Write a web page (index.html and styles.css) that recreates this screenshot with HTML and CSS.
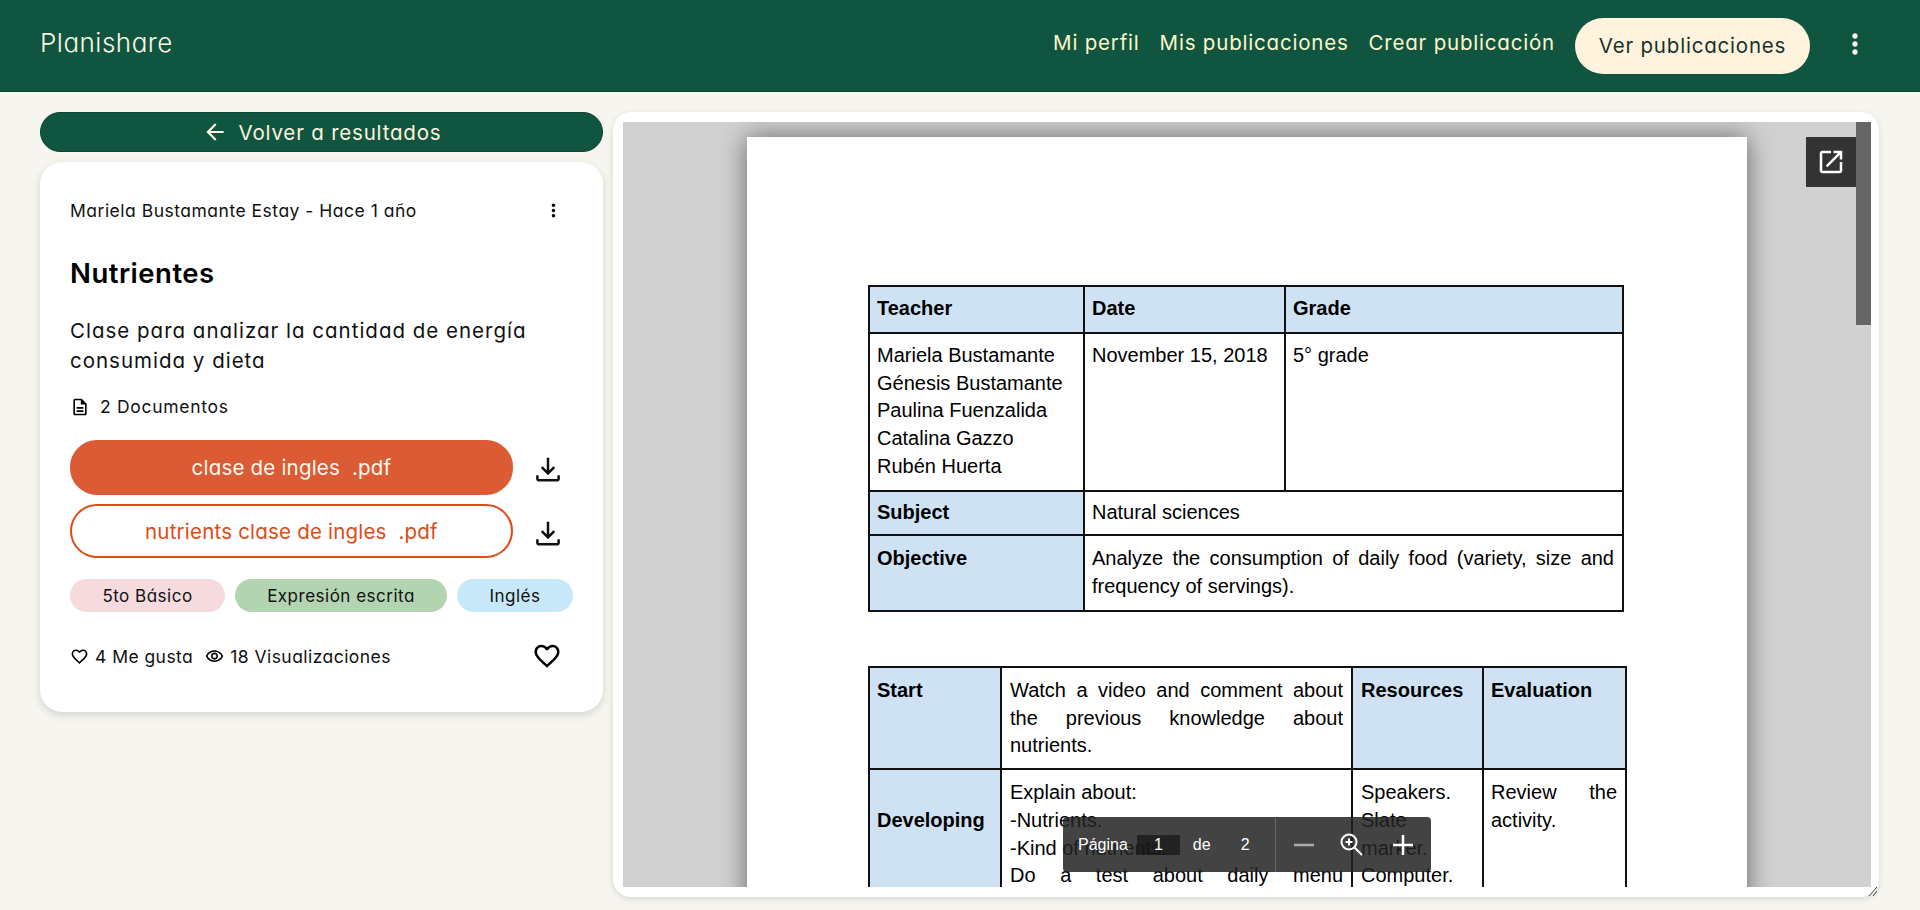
FILE: index.html
```html
<!DOCTYPE html>
<html lang="es">
<head>
<meta charset="utf-8">
<title>Planishare</title>
<link rel="stylesheet" href="styles.css">
</head>
<body>

<header class="topbar">
  <a class="brand" href="#">Planishare</a>
  <nav class="topnav">
    <a href="#">Mi perfil</a>
    <a href="#">Mis publicaciones</a>
    <a href="#">Crear publicación</a>
    <a class="topnav-cta" href="#">Ver publicaciones</a>
    <svg class="topnav-more" viewBox="0 0 24 24"><path d="M12 8c1.1 0 2-.9 2-2s-.9-2-2-2-2 .9-2 2 .9 2 2 2zm0 2c-1.1 0-2 .9-2 2s.9 2 2 2 2-.9 2-2-.9-2-2-2zm0 6c-1.1 0-2 .9-2 2s.9 2 2 2 2-.9 2-2-.9-2-2-2z"/></svg>
  </nav>
</header>

<main class="content">
  <section class="side">
    <a class="back" href="#">
      <svg viewBox="0 0 24 24"><path d="M20 11H7.83l5.59-5.59L12 4l-8 8 8 8 1.41-1.41L7.83 13H20v-2z"/></svg>
      Volver a resultados
    </a>
    <article class="card">
      <div class="meta">
        <span>Mariela Bustamante Estay - Hace 1 año</span>
        <svg class="meta-more" viewBox="0 0 24 24"><path d="M12 8c1.1 0 2-.9 2-2s-.9-2-2-2-2 .9-2 2 .9 2 2 2zm0 2c-1.1 0-2 .9-2 2s.9 2 2 2 2-.9 2-2-.9-2-2-2zm0 6c-1.1 0-2 .9-2 2s.9 2 2 2 2-.9 2-2-.9-2-2-2z"/></svg>
      </div>
      <h1 class="title">Nutrientes</h1>
      <p class="desc">Clase para analizar la cantidad de energía consumida y dieta</p>
      <div class="docs">
        <svg viewBox="0 0 24 24"><path d="M8 16h8v2H8zm0-4h8v2H8zm6-10H6c-1.1 0-2 .9-2 2v16c0 1.1.89 2 1.99 2H18c1.1 0 2-.9 2-2V8l-6-6zm4 18H6V4h7v5h5v11z"/></svg>
        2 Documentos
      </div>

      <div class="file-row file-row-first">
        <a class="file file-active" href="#">clase de ingles&nbsp; .pdf</a>
        <svg class="file-dl" viewBox="0 0 24 24"><path d="M12 3v12M7 10.500l5 5 5-5M3.500 17v2.500a1.500 1.500 0 0 0 1.500 1.500h14a1.500 1.500 0 0 0 1.500-1.500V17"/></svg>
      </div>
      <div class="file-row">
        <a class="file" href="#">nutrients clase de ingles&nbsp; .pdf</a>
        <svg class="file-dl" viewBox="0 0 24 24"><path d="M12 3v12M7 10.500l5 5 5-5M3.500 17v2.500a1.500 1.500 0 0 0 1.500 1.500h14a1.500 1.500 0 0 0 1.500-1.500V17"/></svg>
      </div>

      <div class="chips">
        <span class="chip chip-level">5to Básico</span>
        <span class="chip chip-skill">Expresión escrita</span>
        <span class="chip chip-subject">Inglés</span>
      </div>

      <div class="stats">
        <svg class="stat-icon" viewBox="0 0 24 24"><path d="M16.500 3c-1.740 0-3.410.81-4.500 2.090C10.910 3.810 9.240 3 7.500 3 4.420 3 2 5.420 2 8.500c0 3.780 3.400 6.860 8.550 11.540L12 21.350l1.450-1.320C18.600 15.360 22 12.280 22 8.500 22 5.420 19.580 3 16.500 3zm-4.400 15.550l-.1.1-.1-.1C7.140 14.240 4 11.390 4 8.500 4 6.500 5.500 5 7.500 5c1.540 0 3.040.99 3.570 2.360h1.870C13.460 5.990 14.960 5 16.500 5c2 0 3.500 1.500 3.500 3.500 0 2.890-3.140 5.740-7.900 10.050z"/></svg>
        <span class="stat-text">4 Me gusta</span>
        <svg class="stat-icon stat-eye" viewBox="0 0 24 24"><path d="M12 6c3.790 0 7.170 2.130 8.820 5.500C19.170 14.870 15.790 17 12 17s-7.170-2.130-8.820-5.500C4.830 8.130 8.210 6 12 6m0-2C7 4 2.730 7.110 1 11.500 2.730 15.890 7 19 12 19s9.270-3.110 11-7.500C21.270 7.110 17 4 12 4zm0 5c1.380 0 2.500 1.120 2.500 2.500S13.380 14 12 14s-2.500-1.120-2.500-2.500S10.620 9 12 9m0-2c-2.480 0-4.500 2.020-4.500 4.500S9.520 16 12 16s4.500-2.020 4.500-4.500S14.480 7 12 7z"/></svg>
        <span class="stat-text">18 Visualizaciones</span>
        <svg class="like" viewBox="0 0 24 24"><path d="M16.500 3c-1.740 0-3.410.81-4.500 2.090C10.910 3.810 9.240 3 7.500 3 4.420 3 2 5.420 2 8.500c0 3.780 3.400 6.860 8.550 11.540L12 21.350l1.450-1.320C18.600 15.360 22 12.280 22 8.500 22 5.420 19.580 3 16.500 3zm-4.400 15.550l-.1.1-.1-.1C7.140 14.240 4 11.390 4 8.500 4 6.500 5.500 5 7.500 5c1.540 0 3.040.99 3.570 2.360h1.870C13.460 5.990 14.960 5 16.500 5c2 0 3.500 1.500 3.500 3.500 0 2.890-3.140 5.740-7.900 10.050z"/></svg>
      </div>
    </article>
  </section>

  <section class="panel">
    <div class="viewer">
      <div class="pages">
        <div class="page">
          <table class="sheet sheet-top">
            <colgroup><col class="c-a"><col class="c-b"><col></colgroup>
            <tr class="r-head">
              <th>Teacher</th><th>Date</th><th>Grade</th>
            </tr>
            <tr class="r-names">
              <td>Mariela Bustamante<br>Génesis Bustamante<br>Paulina Fuenzalida<br>Catalina Gazzo<br>Rubén Huerta</td>
              <td>November 15, 2018</td>
              <td>5° grade</td>
            </tr>
            <tr class="r-subject">
              <th>Subject</th>
              <td class="mid" colspan="2">Natural sciences</td>
            </tr>
            <tr class="r-objective">
              <th>Objective</th>
              <td class="just" colspan="2">Analyze the consumption of daily food (variety, size and frequency of servings).</td>
            </tr>
          </table>

          <table class="sheet sheet-plan">
            <colgroup><col class="c-c"><col class="c-d"><col class="c-e"><col></colgroup>
            <tr class="r-start">
              <th>Start</th>
              <td class="just">Watch a video and comment about the previous knowledge about nutrients.</td>
              <th>Resources</th>
              <th>Evaluation</th>
            </tr>
            <tr>
              <th class="label-low">Developing</th>
              <td>Explain about:<br>-Nutrients.<br>-Kind of nutrients.<br><span class="fill-line">Do a test about daily menu</span></td>
              <td>Speakers.<br>Slate<br>marker.<br>Computer.</td>
              <td class="just">Review the activity.</td>
            </tr>
          </table>
        </div>
      </div>
      <div class="scrollbar"><div class="thumb"></div></div>

      <a class="popout" href="#">
        <svg viewBox="0 0 24 24"><path d="M19 19H5V5h7V3H5c-1.110 0-2 .9-2 2v14c0 1.100.89 2 2 2h14c1.100 0 2-.9 2-2v-7h-2v7zM14 3v2h3.590l-9.830 9.830 1.410 1.410L19 6.410V10h2V3h-7z"/></svg>
      </a>

      <div class="pdfbar">
        <div class="pdfbar-pages">
          <span>Página</span>
          <span class="pdfbar-input">1</span>
          <span>de</span>
          <span>2</span>
        </div>
        <div class="pdfbar-zoom">
          <svg class="z-minus" viewBox="0 0 20 20"><path d="M0 10h20"/></svg>
          <svg class="z-lens" viewBox="0 0 24 24"><circle cx="10" cy="10" r="7.500"/><path d="M15.500 15.500 23 23M10 6.500v7M6.500 10h7"/></svg>
          <svg class="z-plus" viewBox="0 0 20 20"><path d="M0 10h20M10 0v20"/></svg>
        </div>
      </div>
    </div>
    <svg class="grip" viewBox="0 0 10 10"><path d="M1 10 9 1M5 10l4-5"/></svg>
  </section>
</main>

</body>
</html>
```

FILE: styles.css
```css
* {
  box-sizing: border-box;
}

html, body {
  margin: 0;
  height: 100%;
}

body {
  display: flex;
  flex-direction: column;
  overflow: hidden;
  background: #f6f5f0;
  color: #111;
  font-family: Inter, "Open Sans", sans-serif;
  font-feature-settings: "cv11";
}

a {
  text-decoration: none;
  color: inherit;
}

/* top bar */
.topbar {
  flex: none;
  height: 92px;
  display: flex;
  align-items: center;
  justify-content: space-between;
  padding: 0 41px 6px 40px;
  background: #0f5540;
  border-bottom: 1px solid #0b4533;
}

.brand {
  color: #fff8e4;
  font-size: 26px;
  font-weight: 300;
  letter-spacing: .5px;
}

.topnav {
  display: flex;
  align-items: center;
  gap: 20px;
  color: #fff6c8;
  font-size: 20.500px;
  font-weight: 400;
  letter-spacing: .8px;
}

.topnav-cta {
  display: flex;
  align-items: center;
  justify-content: center;
  width: 235px;
  height: 56px;
  margin-top: 6px;
  border-radius: 28px;
  background: #fff3de;
  color: #17332a;
}

.topnav-more {
  width: 32px;
  height: 32px;
  margin: 3px 8px 0 9px;
  fill: #fff;
}

/* main area */
.content {
  flex: 1;
  min-height: 0;
  display: grid;
  grid-template-columns: 563px 1fr;
  grid-template-rows: minmax(0, 1fr);
  gap: 10px;
  padding: 20px 41px 13px 40px;
}

.side {
  display: flex;
  flex-direction: column;
  gap: 10px;
  align-items: stretch;
}

.back {
  height: 40px;
  display: flex;
  align-items: center;
  justify-content: center;
  gap: 11px;
  border-radius: 20px;
  background: #0f5540;
  border: 1px solid #0b4533;
  color: #fff3de;
  font-size: 20.500px;
  font-weight: 400;
  letter-spacing: .8px;
}

.back svg {
  width: 26px;
  height: 26px;
  fill: #fff3de;
}

.card {
  height: 550px;
  padding: 34px 30px 0;
  border-radius: 22px;
  background: #fff;
  box-shadow: 0 3px 8px rgba(0, 0, 0, .14);
}

.meta {
  display: flex;
  align-items: center;
  justify-content: space-between;
  height: 28px;
  font-size: 17.500px;
  font-weight: 400;
  letter-spacing: .5px;
}

.meta-more {
  width: 21px;
  height: 21px;
  margin-right: 9px;
}

.title {
  margin: 32px 0 0;
  font-size: 27.500px;
  line-height: 34px;
  font-weight: 600;
  letter-spacing: .5px;
  color: #000;
}

.desc {
  margin: 26px 0 0;
  font-size: 20.500px;
  line-height: 30px;
  font-weight: 400;
  letter-spacing: 1px;
}

.docs {
  display: flex;
  align-items: center;
  gap: 10px;
  margin-top: 20px;
  font-size: 17.500px;
  font-weight: 400;
  letter-spacing: .7px;
}

.docs svg {
  width: 20px;
  height: 20px;
}

.file-row {
  display: flex;
  align-items: center;
  margin-top: 9px;
}

.file-row-first {
  margin-top: 23px;
}

.file {
  flex: none;
  width: 443px;
  height: 54px;
  display: flex;
  align-items: center;
  justify-content: center;
  border: 2px solid #e04a14;
  border-radius: 27px;
  color: #e04a14;
  font-size: 20.500px;
  font-weight: 400;
  letter-spacing: .2px;
}

.file-active {
  height: 55px;
  background: #db5b34;
  border-color: #db5b34;
  color: #fff8ef;
}

.file-dl {
  width: 30px;
  height: 30px;
  margin: 3px 0 0 20px;
  fill: none;
  stroke: #111;
  stroke-width: 2;
}

.chips {
  display: flex;
  gap: 10px;
  margin-top: 21px;
  font-size: 17px;
  font-weight: 400;
  letter-spacing: .5px;
}

.chip {
  height: 33px;
  display: flex;
  align-items: center;
  justify-content: center;
  border-radius: 17px;
}

.chip-level {
  width: 155px;
  background: #f5dade;
}

.chip-skill {
  width: 212px;
  background: #b2d4b0;
}

.chip-subject {
  width: 116px;
  background: #c7e8f9;
}

.stats {
  display: flex;
  align-items: center;
  margin-top: 29px;
  font-size: 17.500px;
  font-weight: 400;
  letter-spacing: .45px;
}

.stat-icon {
  width: 19px;
  height: 19px;
  margin-right: 6px;
}

.stat-eye {
  margin-left: 12px;
}

.like {
  width: 30px;
  height: 30px;
  margin-left: auto;
  margin-right: 11px;
}

/* pdf panel */
.panel {
  position: relative;
  min-height: 0;
  padding: 10px 8px 10px 10px;
  border-radius: 18px;
  background: #fff;
  box-shadow: 0 2px 6px rgba(0, 0, 0, .12);
}

.viewer {
  position: relative;
  height: 100%;
  display: flex;
  overflow: hidden;
}

.pages {
  flex: 1;
  min-width: 0;
  padding: 15px 0 0 124px;
  background: #d1d1d1;
  overflow: hidden;
}

.page {
  width: 1000px;
  height: 1400px;
  padding: 148px 0 0 121px;
  background: #fff;
  box-shadow: 0 0 25px rgba(0, 0, 0, .5);
}

.scrollbar {
  flex: none;
  width: 15px;
  background: #d1d1d1;
}

.thumb {
  height: 203px;
  background: #666;
}

.popout {
  position: absolute;
  top: 15px;
  right: 15px;
  width: 50px;
  height: 50px;
  display: flex;
  align-items: center;
  justify-content: center;
  background: #333;
}

.popout svg {
  width: 30px;
  height: 30px;
  fill: #fff;
}

.pdfbar {
  position: absolute;
  left: 440px;
  top: 695px;
  width: 368px;
  height: 55px;
  display: flex;
  border-radius: 4px;
  background: rgba(34, 34, 34, .85);
  color: #fff;
  font-family: "Liberation Sans", Arial, sans-serif;
  font-size: 16px;
}

.pdfbar-pages {
  width: 213px;
  display: flex;
  align-items: center;
  padding-left: 15px;
  border-right: 1px solid #666;
}

.pdfbar-input {
  width: 43px;
  height: 20px;
  margin: 0 13px 0 9px;
  line-height: 20px;
  text-align: center;
  background: rgba(20, 20, 20, .7);
}

.pdfbar-pages span:last-child {
  margin-left: 30px;
}

.pdfbar-zoom {
  flex: 1;
  position: relative;
}

.pdfbar-zoom svg {
  position: absolute;
  fill: none;
  stroke-width: 2.500;
}

.z-minus {
  left: 18px;
  top: 18px;
  width: 20px;
  height: 20px;
  stroke: #aaa;
}

.z-lens {
  left: 63px;
  top: 15px;
  width: 24px;
  height: 24px;
  stroke: #fff;
  stroke-width: 2 !important;
}

.z-plus {
  left: 117px;
  top: 18px;
  width: 20px;
  height: 20px;
  stroke: #fff;
}

.grip {
  position: absolute;
  right: 1px;
  bottom: 1px;
  width: 10px;
  height: 10px;
  fill: none;
  stroke: #444;
  stroke-width: 1;
}

/* the sheet inside the pdf */
.sheet {
  table-layout: fixed;
  border-collapse: collapse;
  background: #fff;
  color: #000;
  font-family: "Liberation Sans", Arial, sans-serif;
  font-size: 20px;
  line-height: 27.700px;
}

.sheet th, .sheet td {
  padding: 8px 8px 8px 7px;
  border: 2px solid #111;
  vertical-align: top;
  text-align: left;
}

.sheet th {
  background: #cfe2f3;
}

.just {
  text-align: justify !important;
}

.sheet .mid {
  vertical-align: middle;
}

.sheet-top {
  width: 756px;
}

.c-a {
  width: 215px;
}

.c-b {
  width: 201px;
}

.r-head {
  height: 47px;
}

.r-names {
  height: 158px;
}

.sheet .r-subject th, .sheet .r-subject td {
  padding-top: 7px;
  padding-bottom: 7px;
  vertical-align: middle;
}

.r-subject {
  height: 44px;
}

.sheet .r-objective th, .sheet .r-objective td {
  padding-top: 9px;
  padding-bottom: 7px;
}

.r-objective {
  height: 76px;
}

.sheet-plan {
  width: 759px;
  margin-top: 54px;
}

.sheet-plan th, .sheet-plan td {
  padding-top: 9px !important;
}

.sheet-plan tr > :nth-child(2), .sheet-plan tr > :nth-child(3) {
  padding-left: 8px;
}

.c-c {
  width: 132px;
}

.c-d {
  width: 351px;
}

.c-e {
  width: 131px;
}

.r-start {
  height: 102px;
}

.sheet-plan .label-low {
  padding-top: 37px !important;
}

.fill-line {
  display: block;
  text-align: justify;
  text-align-last: justify;
}
```
